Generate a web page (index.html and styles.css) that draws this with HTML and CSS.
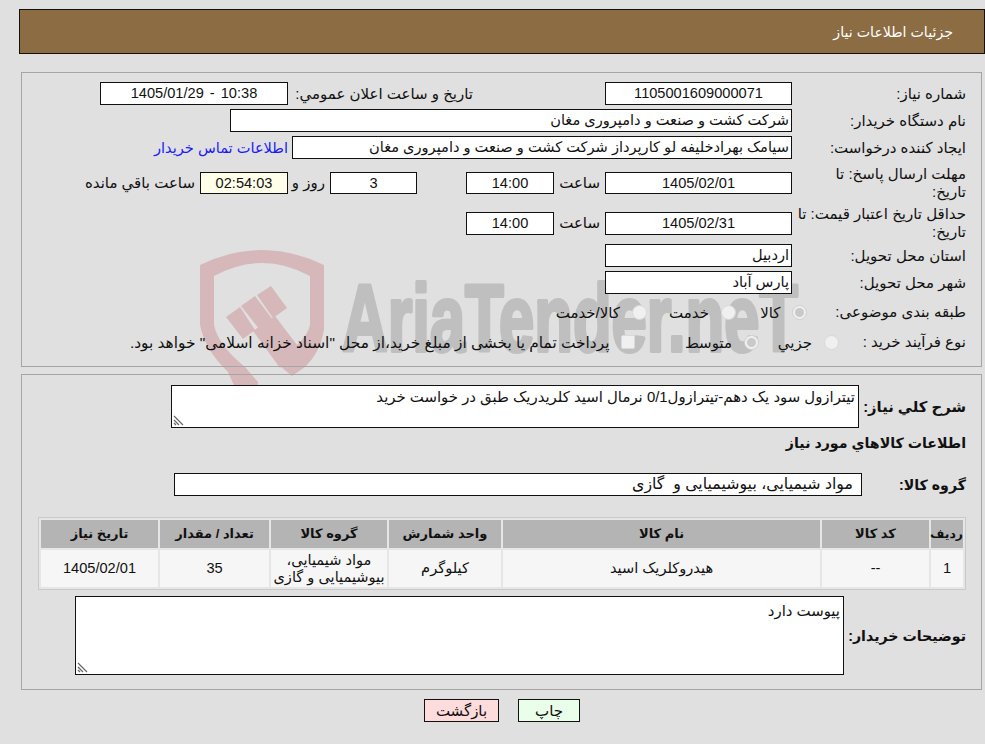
FILE: index.html
```html
<!DOCTYPE html>
<html lang="fa" dir="rtl">
<head>
<meta charset="utf-8">
<title>جزئیات اطلاعات نیاز</title>
<link rel="stylesheet" href="styles.css">
</head>
<body>
<svg class="watermark" width="640" height="160" viewBox="190 245 640 160" aria-hidden="true">
  <path fill="#d6b8ba" d="M200 265 Q262 235 324 265 L324 330 Q320 353 305 367 L292 376 L280 366 L297 345 Q308 335 310 325 L310 276 Q262 250 214 276 L214 325 Q218 345 245 367 L258 382 L258 400 L236 390 L228 372 Q205 350 200 325 Z"/>
  <path fill="#d6b8ba" d="M226 317 L240 307 L255 330 L243 339 Z M241 306 L255 296 L273 320 L260 330 Z M257 295 L271 286 L287 308 L273 318 Z M253 331 L275 316 L297 345 L280 368 Z"/>
  <text class="wm-text" x="342" y="351" textLength="456" lengthAdjust="spacingAndGlyphs">AriaTender.neT</text>
</svg>

<header class="title-bar"><h1>جزئیات اطلاعات نیاز</h1></header>

<section class="panel top-panel">
  <div class="form-row">
    <label class="label">شماره نیاز:</label>
    <output class="field w-187 center">1105001609000071</output>
    <label class="mid-label">تاریخ و ساعت اعلان عمومي:</label>
    <output class="field w-188 center stamp">10:38 - 1405/01/29</output>
  </div>
  <div class="form-row">
    <label class="label">نام دستگاه خریدار:</label>
    <output class="field w-562">شرکت کشت و صنعت و دامپروری مغان</output>
  </div>
  <div class="form-row row-contact">
    <label class="label">ایجاد کننده درخواست:</label>
    <output class="field w-500">سیامک بهرادخلیفه لو کارپرداز شرکت کشت و صنعت و دامپروری مغان</output>
    <a class="contact" href="#">اطلاعات تماس خریدار</a>
  </div>
  <div class="form-row row-deadline">
    <label class="label">مهلت ارسال پاسخ: تا<br>تاریخ:</label>
    <output class="field w-187 h-22 center">1405/02/01</output>
    <span class="time-label">ساعت</span>
    <output class="field w-88 h-22 center">14:00</output>
    <output class="field w-87 h-22 center days">3</output>
    <span class="day-label">روز و</span>
    <output class="field w-88 h-22 center remain">02:54:03</output>
    <span class="remain-label">ساعت باقي مانده</span>
  </div>
  <div class="form-row row-validity">
    <label class="label">حداقل تاریخ اعتبار قیمت: تا<br>تاریخ:</label>
    <output class="field w-187 center">1405/02/31</output>
    <span class="time-label">ساعت</span>
    <output class="field w-88 center">14:00</output>
  </div>
  <div class="form-row">
    <label class="label">استان محل تحویل:</label>
    <output class="field w-187">اردبیل</output>
  </div>
  <div class="form-row row-city">
    <label class="label">شهر محل تحویل:</label>
    <output class="field w-187">پارس آباد</output>
  </div>
  <div class="form-row row-choice">
    <label class="label">طبقه بندی موضوعی:</label>
    <span class="radio on cat-first"></span><span class="opt w-45">کالا</span>
    <span class="radio"></span><span class="opt w-625">خدمت</span>
    <span class="radio"></span><span class="opt">کالا/خدمت</span>
  </div>
  <div class="form-row row-choice">
    <label class="label">نوع فرآیند خرید :</label>
    <span class="radio proc-first"></span><span class="opt w-535">جزیي</span>
    <span class="radio on"></span><span class="opt w-97">متوسط</span>
    <span class="check"></span>
    <span class="opt long">پرداخت تمام یا بخشی از مبلغ خرید،از محل "اسناد خزانه اسلامی" خواهد بود.</span>
  </div>
</section>

<section class="panel bottom-panel">
  <div class="desc-row">
    <label class="b-label desc-label">شرح كلي نیاز:</label>
    <div class="area desc">تیترازول سود یک دهم-تیترازول0/1 نرمال اسید کلریدریک طبق در خواست خرید<svg class="grip" width="11" height="11" viewBox="0 0 11 11" aria-hidden="true"><path d="M1 1 L10 10 M1 5 L6 10 M1 8 L3 10" stroke="#666" stroke-width="1.2" fill="none"/></svg></div>
  </div>
  <h2 class="section-title">اطلاعات كالاهاي مورد نیاز</h2>
  <div class="group-row">
    <label class="b-label">گروه کالا:</label>
    <output class="field w-688 group-field">مواد شیمیایی، بیوشیمیایی و  گازی</output>
  </div>
  <table class="items">
    <thead>
      <tr><th class="c1">ردیف</th><th class="c2">کد کالا</th><th class="c3">نام کالا</th><th class="c4">واحد شمارش</th><th class="c5">گروه کالا</th><th class="c6">تعداد / مقدار</th><th class="c7">تاریخ نیاز</th></tr>
    </thead>
    <tbody>
      <tr><td>1</td><td>--</td><td>هیدروکلریک اسید</td><td>کیلوگرم</td><td>مواد شیمیایی، بیوشیمیایی و گازی</td><td>35</td><td>1405/02/01</td></tr>
    </tbody>
  </table>
  <div class="notes-row">
    <label class="b-label notes-label">توضیحات خریدار:</label>
    <div class="area notes">پیوست دارد<svg class="grip" width="11" height="11" viewBox="0 0 11 11" aria-hidden="true"><path d="M1 1 L10 10 M1 5 L6 10 M1 8 L3 10" stroke="#666" stroke-width="1.2" fill="none"/></svg></div>
  </div>
</section>

<footer class="actions">
  <button class="btn print">چاپ</button>
  <button class="btn back">بازگشت</button>
</footer>
</body>
</html>
```
FILE: styles.css
```css
* { box-sizing: border-box; }
html, body { margin: 0; height: 744px; overflow: hidden; }
body { position: relative; background: #e0e0e0; color: #111; font: 15px/18px "Liberation Sans", "DejaVu Sans", sans-serif; padding: 9px 0 0 19px; }
.watermark { position: absolute; left: 190px; top: 245px; }
.wm-text { font: bold 95px "Liberation Sans", sans-serif; fill: #bfbfbf; stroke: #bfbfbf; stroke-width: 4px; stroke-linejoin: round; direction: ltr; unicode-bidi: embed; }
.title-bar { position: relative; height: 45px; background: #8c6c43; border: 1px solid #111; display: flex; align-items: center; padding-right: 31px; }
.title-bar h1 { margin: 0; font-size: 14.2px; font-weight: normal; color: #fff; }
.panel { position: relative; border: 1px solid #a5a5a5; margin: 0 3px 0 2px; }
.top-panel { margin-top: 18px; height: 295px; padding-top: 9px; }
.bottom-panel { margin-top: 7px; height: 316px; padding-top: 10px; }
.form-row { display: flex; align-items: center; min-height: 23px; margin-bottom: 4px; white-space: nowrap; }
.row-contact { margin-bottom: 5px; }
.row-deadline { height: 37px; }
.row-validity { height: 36px; margin-bottom: 3px; }
.row-city { margin-bottom: 3px; }
.row-choice { height: 30px; margin-bottom: 0; }
.label { width: 189px; flex: none; padding-right: 15px; white-space: nowrap; }
.field { display: block; flex: none; height: 23px; line-height: 20px; background: #fff; border: 1px solid #111; padding: 0 2px; overflow: hidden; font-size: 14.6px; }
.center { text-align: center; }
.stamp { word-spacing: 2px; }
.w-187 { width: 187px; }
.w-188 { width: 188px; }
.w-562 { width: 562px; }
.w-500 { width: 500px; }
.w-88 { width: 88px; }
.w-87 { width: 87px; }
.w-688 { width: 688px; }
.h-22 { height: 22px; }
.mid-label { flex: none; width: 185px; margin-right: 132px; }
.contact { margin-right: 4px; color: #1a1aff; text-decoration: none; font-size: 14.6px; }
.time-label { flex: none; width: 51px; padding-right: 5px; }
.days { margin-right: 49px; }
.day-label { flex: none; width: 42px; padding-right: 5px; }
.remain { background: #ffffe9; }
.remain-label { margin-right: 5px; }
.radio { flex: none; width: 15px; height: 15px; border-radius: 50%; background: #f0f0f0; border: 1px solid #d8d8d8; position: relative; }
.radio.on { border-color: #cfcfcf; }
.radio.on::after { content: ""; position: absolute; left: 2px; top: 2px; width: 9px; height: 9px; border-radius: 50%; background: #c9c9c9; }
.check { flex: none; width: 14px; height: 14px; border-radius: 2px; border: 1px solid #dadada; background: #f0f0f0; }
.opt { flex: none; margin-right: 11.5px; padding-top: 2px; }
.long { font-size: 15.4px; }
.cat-first { margin-right: -15px; }
.proc-first { margin-right: -46.5px; }
.w-45 { width: 45px; }
.w-625 { width: 62.5px; }
.w-535 { width: 53.5px; }
.w-97 { width: 97px; }
.desc-row { display: flex; align-items: center; }
.b-label { flex: none; width: 122px; padding-right: 15px; font-weight: bold; font-size: 14.2px; white-space: nowrap; }
.desc-label { font-size: 14.8px; }
.area { position: relative; background: #fff; border: 1px solid #111; padding: 2px 3px; font-size: 14.9px; }
.desc { width: 688px; height: 43px; }
.grip { position: absolute; left: 1px; bottom: 1px; }
.section-title { margin: 5px 15px 0 0; font-size: 14.2px; line-height: 20px; font-weight: bold; }
.group-row { display: flex; align-items: center; margin-top: 20px; }
.group-row .b-label { width: 119px; }
.group-field { padding-right: 8px; white-space: pre; font-size: 15.8px; }
.items { width: 928px; margin: 21px 15px 0 0; border: 1px solid #c9c9c9; border-collapse: separate; border-spacing: 2px; table-layout: fixed; background: #e6e6e6; font-size: 14.6px; }
.items th { background: #b4b4b4; height: 28px; padding: 0; font-size: 13px; font-weight: bold; }
.items th.c1 { font-size: 12.4px; }
.items td { background: #f6f6f6; height: 37px; padding: 0 2px; text-align: center; line-height: 17px; }
.c1 { width: 32px; } .c2 { width: 107px; } .c3 { width: 317px; } .c4 { width: 112px; } .c5 { width: 116px; } .c6 { width: 109px; } .c7 { width: 117px; }
.notes-row { display: flex; align-items: center; margin-top: 6px; }
.notes-label { width: 137px; }
.notes { width: 769px; height: 79px; padding: 5px 3px; }
.actions { position: relative; display: flex; justify-content: center; gap: 19px; margin-top: 9px; }
.btn { height: 23px; border: 1px solid #111; font: 15px/18px "Liberation Sans", "DejaVu Sans", sans-serif; color: #111; padding: 0; }
.print { width: 62px; background: #eaffea; }
.back { width: 75px; background: #ffdcdc; }
```
